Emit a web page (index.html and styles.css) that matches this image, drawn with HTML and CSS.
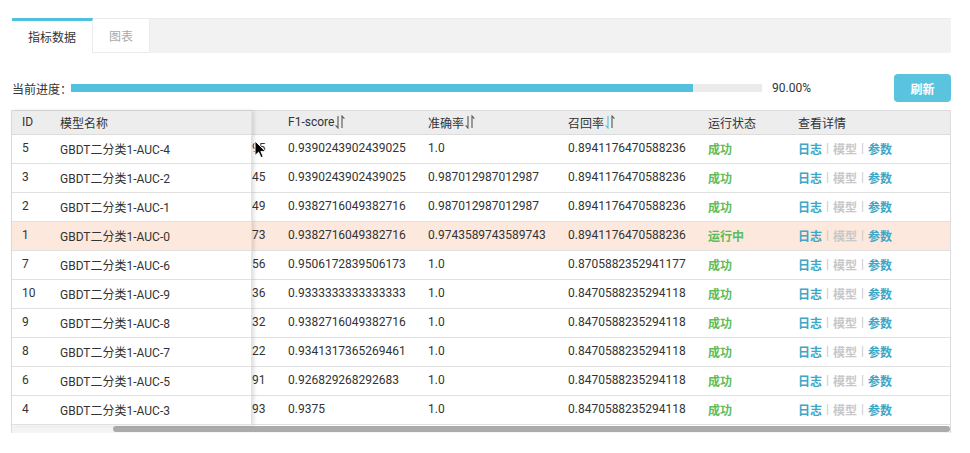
FILE: index.html
```html
<!DOCTYPE html>
<html lang="zh">
<head>
<meta charset="utf-8">
<title>指标数据</title>
<link rel="stylesheet" href="styles.css">
</head>
<body>
<div class="page">
  <div class="tabs">
    <div class="tab active">指标数据</div>
    <div class="tab">图表</div>
  </div>

  <div class="progress-row">
    <span class="label">当前进度：</span>
    <div class="bar"><div class="fill" style="width:90%"></div></div>
    <span class="pct">90.00%</span>
    <button class="btn">刷新</button>
  </div>

  <div class="table">
    <div class="table-body">
      <div class="fixed">
        <div class="row head"><div class="c id">ID</div><div class="c name">模型名称</div></div>
        <div class="row"><div class="c id">5</div><div class="c name">GBDT二分类1-AUC-4</div></div>
        <div class="row"><div class="c id">3</div><div class="c name">GBDT二分类1-AUC-2</div></div>
        <div class="row"><div class="c id">2</div><div class="c name">GBDT二分类1-AUC-1</div></div>
        <div class="row running"><div class="c id">1</div><div class="c name">GBDT二分类1-AUC-0</div></div>
        <div class="row"><div class="c id">7</div><div class="c name">GBDT二分类1-AUC-6</div></div>
        <div class="row"><div class="c id">10</div><div class="c name">GBDT二分类1-AUC-9</div></div>
        <div class="row"><div class="c id">9</div><div class="c name">GBDT二分类1-AUC-8</div></div>
        <div class="row"><div class="c id">8</div><div class="c name">GBDT二分类1-AUC-7</div></div>
        <div class="row"><div class="c id">6</div><div class="c name">GBDT二分类1-AUC-5</div></div>
        <div class="row"><div class="c id">4</div><div class="c name">GBDT二分类1-AUC-3</div></div>
      </div>
      <div class="scroll">
        <div class="row head">
          <div class="c part"></div>
          <div class="c num">F1-score<svg class="sort" viewBox="0 0 10 14"><path class="dn" d="M3 1V13L0.6 10.4"/><path class="up" d="M7 13V1L9.4 3.6"/></svg></div>
          <div class="c num">准确率<svg class="sort" viewBox="0 0 10 14"><path class="dn" d="M3 1V13L0.6 10.4"/><path class="up" d="M7 13V1L9.4 3.6"/></svg></div>
          <div class="c num">召回率<svg class="sort" viewBox="0 0 10 14"><path class="dn active" d="M3 1V13L0.6 10.4"/><path class="up" d="M7 13V1L9.4 3.6"/></svg></div>
          <div class="c status">运行状态</div>
          <div class="c detail">查看详情</div>
        </div>
        <div class="row"><div class="c part">95</div><div class="c num">0.9390243902439025</div><div class="c num">1.0</div><div class="c num">0.8941176470588236</div><div class="c status ok">成功</div><div class="c detail"><a class="lk">日志</a><span class="sep">|</span><a class="lk off">模型</a><span class="sep">|</span><a class="lk">参数</a></div></div>
        <div class="row"><div class="c part">45</div><div class="c num">0.9390243902439025</div><div class="c num">0.987012987012987</div><div class="c num">0.8941176470588236</div><div class="c status ok">成功</div><div class="c detail"><a class="lk">日志</a><span class="sep">|</span><a class="lk off">模型</a><span class="sep">|</span><a class="lk">参数</a></div></div>
        <div class="row"><div class="c part">49</div><div class="c num">0.9382716049382716</div><div class="c num">0.987012987012987</div><div class="c num">0.8941176470588236</div><div class="c status ok">成功</div><div class="c detail"><a class="lk">日志</a><span class="sep">|</span><a class="lk off">模型</a><span class="sep">|</span><a class="lk">参数</a></div></div>
        <div class="row running"><div class="c part">73</div><div class="c num">0.9382716049382716</div><div class="c num">0.9743589743589743</div><div class="c num">0.8941176470588236</div><div class="c status ok">运行中</div><div class="c detail"><a class="lk">日志</a><span class="sep">|</span><a class="lk off">模型</a><span class="sep">|</span><a class="lk">参数</a></div></div>
        <div class="row"><div class="c part">56</div><div class="c num">0.9506172839506173</div><div class="c num">1.0</div><div class="c num">0.8705882352941177</div><div class="c status ok">成功</div><div class="c detail"><a class="lk">日志</a><span class="sep">|</span><a class="lk off">模型</a><span class="sep">|</span><a class="lk">参数</a></div></div>
        <div class="row"><div class="c part">36</div><div class="c num">0.9333333333333333</div><div class="c num">1.0</div><div class="c num">0.8470588235294118</div><div class="c status ok">成功</div><div class="c detail"><a class="lk">日志</a><span class="sep">|</span><a class="lk off">模型</a><span class="sep">|</span><a class="lk">参数</a></div></div>
        <div class="row"><div class="c part">32</div><div class="c num">0.9382716049382716</div><div class="c num">1.0</div><div class="c num">0.8470588235294118</div><div class="c status ok">成功</div><div class="c detail"><a class="lk">日志</a><span class="sep">|</span><a class="lk off">模型</a><span class="sep">|</span><a class="lk">参数</a></div></div>
        <div class="row"><div class="c part">22</div><div class="c num">0.9341317365269461</div><div class="c num">1.0</div><div class="c num">0.8470588235294118</div><div class="c status ok">成功</div><div class="c detail"><a class="lk">日志</a><span class="sep">|</span><a class="lk off">模型</a><span class="sep">|</span><a class="lk">参数</a></div></div>
        <div class="row"><div class="c part">91</div><div class="c num">0.926829268292683</div><div class="c num">1.0</div><div class="c num">0.8470588235294118</div><div class="c status ok">成功</div><div class="c detail"><a class="lk">日志</a><span class="sep">|</span><a class="lk off">模型</a><span class="sep">|</span><a class="lk">参数</a></div></div>
        <div class="row"><div class="c part">93</div><div class="c num">0.9375</div><div class="c num">1.0</div><div class="c num">0.8470588235294118</div><div class="c status ok">成功</div><div class="c detail"><a class="lk">日志</a><span class="sep">|</span><a class="lk off">模型</a><span class="sep">|</span><a class="lk">参数</a></div></div>
      </div>
      <svg class="cursor" viewBox="0 0 12 19"><path d="M1 1V15.5L4.6 12.2L7 17.6L9.2 16.6L6.9 11.4H11.5Z"/></svg>
    </div>
    <div class="hscroll"><div class="thumb"></div></div>
  </div>
</div>
</body>
</html>
```

FILE: styles.css
```css
html, body {
  margin: 0;
  padding: 0;
  background: #fff;
}
body {
  font-family: Roboto, "Noto Sans CJK SC", sans-serif;
  font-size: 12px;
  color: #333;
}
.page {
  width: 940px;
  padding: 18px 0 0 11px;
}

/* tabs */
.tabs {
  display: flex;
  height: 35px;
  margin-left: 1px;
  background: #f2f2f2;
  border-top: 1px solid #ebebeb;
  box-sizing: border-box;
}
.tab {
  display: flex;
  align-items: center;
  justify-content: center;
  white-space: nowrap;
  margin-top: -1px;
  height: 35px;
  box-sizing: border-box;
  padding: 0 16px;
  background: #fff;
  color: #aaa;
  border-top: 1px solid #ebebeb;
  border-right: 1px solid #ebebeb;
  border-bottom: 1px solid #ebebeb;
}
.tab.active {
  color: #333;
  border-top: 3px solid #4fc1dd;
  border-bottom: none;
  padding-bottom: 2px;
}

/* progress */
.progress-row {
  display: flex;
  align-items: center;
  margin: 21px 0 8px 1px;
  height: 28px;
}
.label {
  width: 59px;
  flex: none;
  white-space: nowrap;
}
.bar {
  flex: 1;
  height: 8px;
  background: #ebebeb;
}
.fill {
  height: 100%;
  background: #52c1de;
}
.pct {
  flex: none;
  width: 122px;
  margin-left: 10px;
}
.btn {
  flex: none;
  width: 57px;
  height: 28px;
  border: none;
  border-radius: 4px;
  background: #5ac4df;
  color: #fff;
  font-family: "Noto Sans CJK SC", sans-serif;
  font-size: 12px;
  font-weight: bold;
  padding: 0;
}

/* table */
.table {
  border-left: 1px solid #dcdcdc;
  border-right: 1px solid #dcdcdc;
  border-top: 1px solid #dcdcdc;
}
.table-body {
  display: flex;
  position: relative;
}
.fixed {
  width: 240px;
  flex: none;
  position: relative;
  z-index: 1;
  background: #fff;
  border-right: 1px solid #e2e2e2;
  box-sizing: border-box;
  box-shadow: 2px 0 4px rgba(0, 0, 0, 0.13);
}
.scroll {
  flex: 1;
  min-width: 0;
}
.row {
  display: flex;
  height: 29px;
  box-sizing: border-box;
  border-bottom: 1px solid #e0e0e0;
  background: #fff;
}
.row.head {
  height: 24px;
  background: #ededed;
  border-bottom: 1px solid #dcdcdc;
}
.row.running {
  background: #fce8dc;
}
.c {
  display: flex;
  align-items: center;
  padding: 0 0 2px 10px;
  box-sizing: border-box;
  white-space: nowrap;
  flex: none;
}
.head .c {
  padding-bottom: 1px;
}
.id { width: 38px; }
.name { width: 201px; }
.part {
  width: 26px;
  padding: 0 13px 2px 0;
  justify-content: flex-end;
  overflow: hidden;
  direction: rtl;
}
.head .part { padding: 0; }
.num { width: 140px; }
.status { width: 90px; }
.detail { flex: 1; }

.sort {
  width: 10px;
  height: 14px;
  margin-left: 1px;
  fill: none;
  stroke: #555;
  stroke-width: 1.1;
}
.sort .active { stroke: #4fc1dd; }

.ok {
  color: #5cbd5c;
  font-family: "Noto Sans CJK SC", sans-serif;
  font-weight: bold;
}
.lk {
  color: #3ea6c6;
  font-family: "Noto Sans CJK SC", sans-serif;
  font-weight: bold;
}
.lk.off { color: #c8c8c8; }
.sep {
  color: #c8c8c8;
  margin: 0 4px;
}

.cursor {
  position: absolute;
  left: 242px;
  top: 29px;
  width: 12px;
  height: 19px;
  z-index: 2;
}
.cursor path {
  fill: #000;
  stroke: #fff;
  stroke-width: 1;
}

.hscroll {
  height: 7px;
  background: #f4f4f4;
  padding-left: 101px;
}
.thumb {
  height: 6px;
  margin-top: 1px;
  background: #ababab;
  border-radius: 3px;
}
```
